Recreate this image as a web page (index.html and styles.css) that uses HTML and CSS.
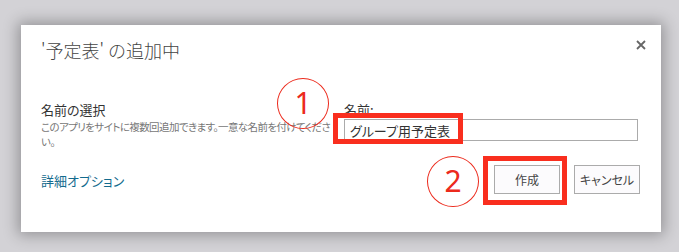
FILE: index.html
```html
<!DOCTYPE html>
<html lang="ja">
<head>
<meta charset="utf-8">
<title>'予定表' の追加中</title>
<link rel="stylesheet" href="styles.css">
</head>
<body>
<div class="dialog">
  <div class="header">
    <h1 class="title">'予定表' の追加中</h1>
    <button class="close" aria-label="閉じる">
      <svg width="10" height="10" viewBox="0 0 10 10"><path d="M1 1 L9 9 M9 1 L1 9" stroke="#666" stroke-width="1.8" fill="none"/></svg>
    </button>
  </div>
  <div class="form">
    <div class="left">
      <div class="heading">名前の選択</div>
      <div class="desc">このアプリをサイトに複数回追加できます。一意な名前を付けてください。</div>
    </div>
    <div class="right">
      <div class="label">名前:</div>
      <input class="name-input" type="text" value="グループ用予定表">
    </div>
  </div>
  <div class="footer">
    <a class="link" href="#">詳細オプション</a>
    <div class="buttons">
      <button class="btn">作成</button>
      <button class="btn">キャンセル</button>
    </div>
  </div>

  <div class="mark circle c1">1</div>
  <div class="mark box b1"></div>
  <div class="mark circle c2">2</div>
  <div class="mark box b2"></div>
</div>
</body>
</html>
```
FILE: styles.css
```css
html, body {
  margin: 0;
  padding: 0;
}
body {
  width: 679px;
  height: 252px;
  overflow: hidden;
  background: #d3d2d6;
  padding: 25px 0 0 21px;
  box-sizing: border-box;
  font-family: "Noto Sans CJK JP", "Noto Sans", sans-serif;
  font-feature-settings: "palt";
}
.dialog {
  position: relative;
  width: 640px;
  height: 207px;
  background: #fff;
  box-shadow: 0 0 14px 3px rgba(0, 0, 0, 0.3);
  padding: 13px 21px 0 20px;
  box-sizing: border-box;
  display: flex;
  flex-direction: column;
}
.header {
  display: flex;
  justify-content: space-between;
  align-items: flex-start;
}
.title {
  margin: 0;
  font-size: 18px;
  line-height: 24px;
  font-weight: 300;
  color: #444;
  font-feature-settings: normal;
}
.close {
  margin: 2px -6px 0 0;
  padding: 0;
  border: 0;
  background: none;
  width: 10px;
  height: 10px;
  display: flex;
}
.form {
  margin-top: 40px;
  display: grid;
  grid-template-columns: 303px 296px;
}
.heading {
  font-size: 13px;
  line-height: 16px;
  color: #333;
}
.desc {
  max-width: 292px;
  font-size: 10.5px;
  letter-spacing: -0.6px;
  line-height: 15px;
  color: #777;
  margin-top: 1px;
}
.label {
  font-size: 13px;
  line-height: 16px;
  color: #333;
}
.name-input {
  display: block;
  margin-top: 1px;
  width: 294px;
  height: 22px;
  box-sizing: border-box;
  border: 1px solid #ababab;
  padding: 0 0 0 5px;
  font-family: inherit;
  font-feature-settings: "palt";
  font-size: 13px;
  color: #333;
  outline: none;
}
.footer {
  margin-top: 16px;
  display: flex;
  justify-content: space-between;
  align-items: center;
}
.link {
  font-size: 13px;
  line-height: 16px;
  color: #136b8e;
  text-decoration: none;
  margin-top: 2px;
}
.buttons {
  display: flex;
  gap: 14px;
}
.btn {
  width: 66px;
  height: 29px;
  border: 1px solid #ababab;
  background: #fcfbfd;
  font-family: inherit;
  font-feature-settings: "palt";
  font-size: 12px;
  color: #444;
  padding: 0;
}

/* annotation overlays */
.mark {
  position: absolute;
  box-sizing: border-box;
}
.circle {
  width: 52px;
  height: 51px;
  border: 1.5px solid #ec2a1c;
  border-radius: 50%;
  color: #ec2a1c;
  font-family: "Noto Sans", sans-serif;
  font-size: 30px;
  line-height: 48px;
  text-align: center;
}
.c1 { left: 256px; top: 53px; }
.c2 { left: 406px; top: 131px; }
.box {
  border: 5px solid #f92e1e;
}
.b1 { left: 312px; top: 88px; width: 130px; height: 31px; }
.b2 { left: 462px; top: 131px; width: 84px; height: 49px; }
```
